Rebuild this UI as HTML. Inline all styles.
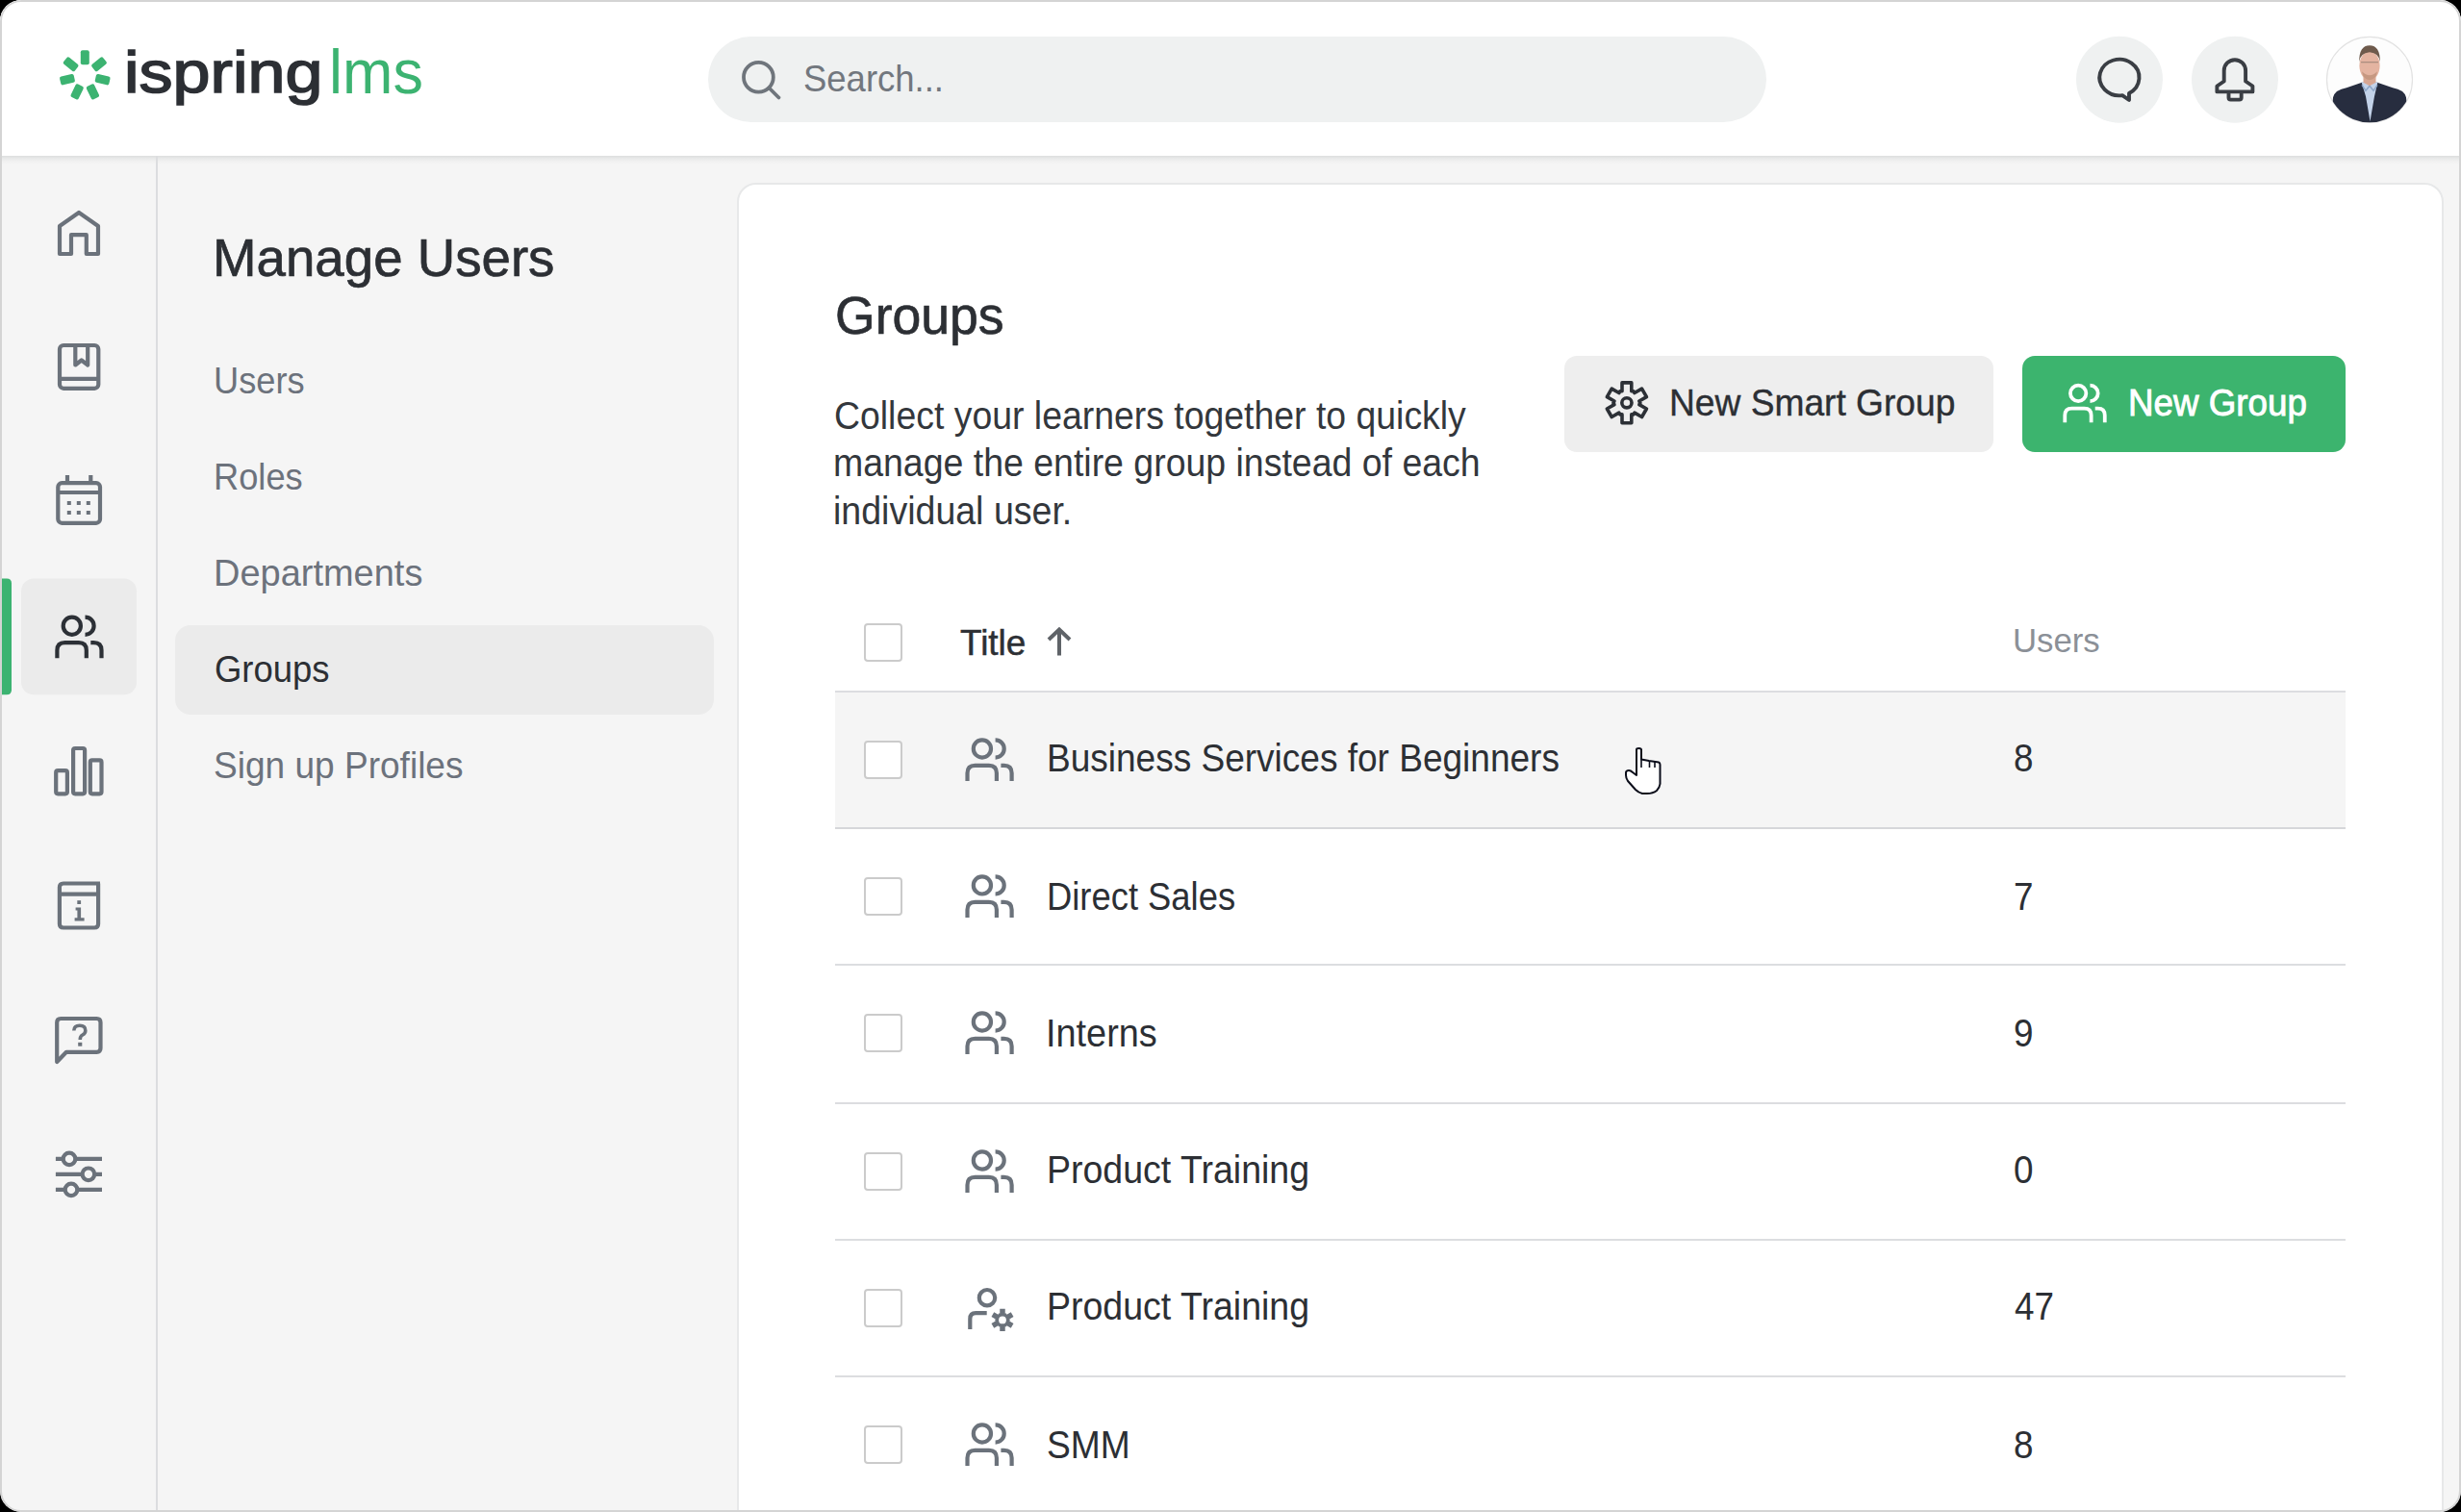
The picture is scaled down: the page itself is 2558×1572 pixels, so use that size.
<!DOCTYPE html>
<html><head><meta charset="utf-8">
<style>
html,body{margin:0;padding:0;background:#000;}
body{width:2558px;height:1572px;overflow:hidden;position:relative;font-family:"Liberation Sans",sans-serif;}
#frame{position:absolute;left:0;top:0;width:2558px;height:1572px;border-radius:22px;overflow:hidden;background:#f5f5f5;}
#border{position:absolute;left:0;top:0;width:2558px;height:1572px;box-sizing:border-box;border:2px solid #d4d4d4;border-radius:22px;}
.a{position:absolute;}
.t{position:absolute;white-space:pre;line-height:1;transform-origin:0 0;}
svg.a{overflow:visible;}
.cb{width:40px;height:40px;box-sizing:border-box;border:2px solid #cbcbcb;border-radius:4px;background:#fff;}
</style></head>
<body>
<div id="frame">
  <div class="a" style="left:0;top:0;width:2558px;height:162px;background:#fff;"></div>
  <div class="a" style="left:0;top:162px;width:2558px;height:9px;background:linear-gradient(#dcdede,#e8e9e9 30%,#f1f1f1 65%,#f5f5f5);"></div>
  <div class="a" style="left:162px;top:162px;width:2px;height:1410px;background:#dcdddf;"></div>
  <div class="a" style="left:766px;top:190px;width:1774px;height:1420px;box-sizing:border-box;background:#fff;border-radius:20px;border:2px solid #e7e8e9;"></div>
  <div class="a" style="left:736px;top:38px;width:1100px;height:89px;border-radius:45px;background:#eff1f1;"></div>
  <div class="a" style="left:182px;top:650px;width:560px;height:93px;border-radius:16px;background:#ebebeb;"></div>
  <div class="a" style="left:1626px;top:370px;width:446px;height:100px;border-radius:13px;background:#eeeeee;"></div>
  <div class="a" style="left:2102px;top:370px;width:336px;height:100px;border-radius:13px;background:#3cb46e;"></div>
  <div class="a cb" style="left:898px;top:648px;"></div><div class="a" style="left:868px;top:718.05px;width:1570px;height:2px;background:#dcdde0;"></div><div class="a" style="left:868px;top:720.05px;width:1570px;height:139.95px;background:#f5f5f5;"></div><div class="a" style="left:868px;top:860.00px;width:1570px;height:2px;background:#d6d7da;"></div><div class="a cb" style="left:898px;top:770.05px;"></div><div class="a" style="left:868px;top:1002.05px;width:1570px;height:2px;background:#dcdde0;"></div><div class="a cb" style="left:898px;top:912.00px;"></div><div class="a" style="left:868px;top:1146.10px;width:1570px;height:2px;background:#dcdde0;"></div><div class="a cb" style="left:898px;top:1054.05px;"></div><div class="a" style="left:868px;top:1287.90px;width:1570px;height:2px;background:#dcdde0;"></div><div class="a cb" style="left:898px;top:1198.10px;"></div><div class="a" style="left:868px;top:1430.05px;width:1570px;height:2px;background:#dcdde0;"></div><div class="a cb" style="left:898px;top:1339.90px;"></div><div class="a cb" style="left:898px;top:1482.05px;"></div>

  <svg class="a" style="left:0;top:0" width="2558" height="1572" viewBox="0 0 2558 1572">
    <defs>
      <g id="grp" fill="none" stroke-width="4.2">
        <circle cx="18.6" cy="11.1" r="9.1"/>
        <path d="M32.3 2 A9.1 9.1 0 0 1 32.3 20.2"/>
        <path d="M3.2 44.7 L3.2 36.5 Q3.2 28.5 11.2 28.5 L25.6 28.5 Q33.6 28.5 33.6 36.5 L33.6 44.7"/>
        <path d="M38.1 28.5 L41.3 28.5 Q49.3 28.5 49.3 36.5 L49.3 44.7"/>
      </g>
      <path id="gearp" d="M-7.00 -12.12 L-4.90 -12.12 L-4.90 -20.90 L4.90 -20.90 L4.90 -12.12 L7.00 -12.12 L8.05 -10.31 L15.65 -14.69 L20.55 -6.21 L12.95 -1.82 L14.00 0.00 L12.95 1.82 L20.55 6.21 L15.65 14.69 L8.05 10.31 L7.00 12.12 L4.90 12.12 L4.90 20.90 L-4.90 20.90 L-4.90 12.12 L-7.00 12.12 L-8.05 10.31 L-15.65 14.69 L-20.55 6.21 L-12.95 1.82 L-14.00 -0.00 L-12.95 -1.82 L-20.55 -6.21 L-15.65 -14.69 L-8.05 -10.31Z"/>
      <clipPath id="avc"><circle cx="2463" cy="82.8" r="44.5"/></clipPath>
    </defs>
    <g fill="#3cb371"><rect x="99.60" y="74.00" width="15.00" height="9.00" rx="2" transform="rotate(-90.00 88.30 78.50)"/>
<rect x="99.60" y="74.00" width="15.00" height="9.00" rx="2" transform="rotate(-38.57 88.30 78.50)"/>
<rect x="99.60" y="74.00" width="15.00" height="9.00" rx="2" transform="rotate(12.86 88.30 78.50)"/>
<rect x="99.60" y="74.00" width="15.00" height="9.00" rx="2" transform="rotate(64.29 88.30 78.50)"/>
<rect x="99.60" y="74.00" width="15.00" height="9.00" rx="2" transform="rotate(115.71 88.30 78.50)"/>
<rect x="99.60" y="74.00" width="15.00" height="9.00" rx="2" transform="rotate(167.14 88.30 78.50)"/>
<rect x="99.60" y="74.00" width="15.00" height="9.00" rx="2" transform="rotate(218.57 88.30 78.50)"/></g>
    <g fill="none" stroke="#6f757c" stroke-width="3.8" stroke-linecap="round">
      <circle cx="788.4" cy="80.2" r="15.4"/>
      <path d="M800 92 L809.5 101.5"/>
    </g>
    <circle cx="2203" cy="82.8" r="45" fill="#eff1f1"/>
    <circle cx="2323" cy="82.8" r="45" fill="#eff1f1"/>
    <g fill="none" stroke="#3a3e44" stroke-width="3.9" stroke-linejoin="round" stroke-linecap="round">
      <path d="M2206 99.1 L2213 104 L2213 96.9 A20.6 18.8 0 1 0 2206 99.1 Z"/>
      <path d="M2311.7 84.5 L2311.7 73.4 A11.2 11.2 0 0 1 2334.1 73.4 L2334.1 84.5 L2341.4 89.5 L2341.4 95.4 L2304.4 95.4 L2304.4 89.5 Z"/>
      <path d="M2316.5 97.5 L2316.5 101.5 Q2316.5 103.6 2318.6 103.6 L2327.6 103.6 Q2329.7 103.6 2329.7 101.5 L2329.7 97.5"/>
    </g>
    <g transform="translate(2418 38.3)">
    <circle cx="45" cy="44.5" r="44.5" fill="#fdfdfd" stroke="#e2e2e2" stroke-width="1.2"/>
    </g>
    <g clip-path="url(#avc)"><g transform="translate(2418 38.3)">
      <path d="M5 90 L7 63 Q9 55 21 53 L37 47.5 L53 47.5 L69 53 Q81 55 83 63 L85 90 Z" fill="#272d3f"/>
      <path d="M36.5 47 L53.5 47 L50 62 L45.5 88 L41 62 Z" fill="#c3d2e9"/>
      <path d="M37 50 L41 56 L45 51 L49 56 L53 50" fill="none" stroke="#8da6c8" stroke-width="1.5"/>
      <path d="M38.5 37 L51.5 37 L51.5 47.5 L45 51 L38.5 47.5 Z" fill="#d7a692"/>
      <ellipse cx="45" cy="30" rx="10.6" ry="15" fill="#e4b4a1"/>
      <path d="M34.2 26 Q34 9 45 9 Q56 9 55.8 26 Q55 17 45 16 Q35 17 34.2 26 Z" fill="#6e5a4c"/>
      <path d="M36 26.5 L54 26.5" stroke="#9a8276" stroke-width="1.1"/>
      <path d="M37 36 Q38 44.5 45 45 Q52 44.5 53 36 Q49 40 45 40 Q41 40 37 36 Z" fill="#b98b74" opacity="0.7"/>
    </g></g>

    <rect x="22" y="601.6" width="120" height="120.7" rx="13" fill="#ebebeb"/>
    <path d="M2 601.6 L7 601.6 Q12 601.6 12 606.6 L12 717.3 Q12 722.3 7 722.3 L2 722.3 Z" fill="#3cb371"/>
    <g fill="none" stroke="#6b727b" stroke-width="4.2" stroke-linejoin="round">
      <path d="M62 264 L62 235 L82 221 L102 235 L102 264 L89.8 264 L89.8 244.2 L74 244.2 L74 264 Z"/>
      <rect x="62" y="359" width="40.3" height="44.8" rx="4"/>
      <path d="M62 393.9 L102.3 393.9"/>
      <path d="M78.3 359 L78.3 379.5 L84.7 374.5 L91.2 379.5 L91.2 359"/>
      <rect x="60.3" y="502.2" width="43.7" height="41.6" rx="4"/>
      <path d="M60.3 512 L104 512 M70 494 L70 502 M94.3 494 L94.3 502"/>
      <rect x="58.2" y="801.2" width="11.7" height="24.1" rx="2"/>
      <rect x="76.1" y="778" width="12" height="47.3" rx="2"/>
      <rect x="93.8" y="790.4" width="11.7" height="34.9" rx="2"/>
      <path d="M102.1 918.5 L102.1 960.5 Q102.1 964.5 98.1 964.5 L65.9 964.5 Q61.9 964.5 61.9 960.5 L61.9 922.5 Q61.9 918.5 65.9 918.5 L104 918.5 M61.9 929.7 L102.1 929.7"/>
      <path d="M59.2 1104 L59.2 1063 Q59.2 1059 63.2 1059 L100.5 1059 Q104.5 1059 104.5 1063 L104.5 1089.8 Q104.5 1093.8 100.5 1093.8 L69 1093.8 Z"/>
      <path d="M57.9 1204.9 L64.5 1204.9 M79.5 1204.9 L106 1204.9 M57.9 1220.8 L84.4 1220.8 M99.4 1220.8 L106 1220.8 M57.9 1236.9 L66.5 1236.9 M81.5 1236.9 L106 1236.9"/>
      <circle cx="72" cy="1204.9" r="6.3"/>
      <circle cx="91.9" cy="1220.8" r="6.3"/>
      <circle cx="74" cy="1236.9" r="6.3"/>
    </g>
    <g fill="#6b727b">
      <rect x="69.8" y="521" width="4" height="4"/><rect x="79.8" y="521" width="4" height="4"/><rect x="89.8" y="521" width="4" height="4"/>
      <rect x="69.8" y="531" width="4" height="4"/><rect x="79.8" y="531" width="4" height="4"/><rect x="89.8" y="531" width="4" height="4"/>
    </g>
    <g fill="#6b727b"><rect x="80.3" y="936.2" width="3.8" height="3.8"/><path d="M78.6 943.6 L84.1 943.6 L84.1 954.2 L87.6 954.2 L87.6 957.4 L77.6 957.4 L77.6 954.2 L80.4 954.2 L80.4 946.6 L78.6 946.6 Z"/></g>
    <path d="M76.8 1071.5 Q77 1066.3 82.8 1066.3 Q88.8 1066.3 88.8 1071.4 Q88.8 1074.4 85.8 1076 Q83.3 1077.4 83.3 1080.2 L83.3 1081" fill="none" stroke="#6b727b" stroke-width="3.6"/><rect x="81.2" y="1083.8" width="4.1" height="3.9" fill="#6b727b"/>
    <use href="#grp" x="56.2" y="639.6" stroke="#2c3036"/>

    <g fill="none" stroke="#2c3036" stroke-width="3.6" stroke-linejoin="round">
      <use href="#gearp" transform="translate(1690.9 418.8)"/>
      <circle cx="1690.9" cy="418.8" r="5.1"/>
    </g>
    <use href="#grp" transform="translate(2143.4 398.9) scale(0.9)" stroke="#fff" stroke-width="4.4"/>
    <g fill="none" stroke="#5f6368" stroke-width="3.6">
      <path d="M1101 657 L1101 681.6 M1090 665 L1101 654.5 L1112 665" stroke-width="4"/>
    </g>
    <use href="#grp" transform="translate(1002.3 767.35)" stroke="#6b727b"/><use href="#grp" transform="translate(1002.3 909.30)" stroke="#6b727b"/><use href="#grp" transform="translate(1002.3 1051.35)" stroke="#6b727b"/><use href="#grp" transform="translate(1002.3 1195.40)" stroke="#6b727b"/><g fill="none" stroke="#6b727b" stroke-width="4.2"><circle cx="1026" cy="1349.20" r="8.2"/><path d="M1008.3 1382.10 L1008.3 1371.20 Q1008.3 1365.20 1014.3 1365.20 L1025.7 1365.20"/></g><use href="#gearp" transform="translate(1042 1372.40) scale(0.56)" fill="#6b727b" stroke="none"/><circle cx="1042" cy="1372.40" r="3.9" fill="#fff"/><use href="#grp" transform="translate(1002.3 1479.35)" stroke="#6b727b"/>
    <g transform="translate(1690 778)">
      <path d="M11 1 Q11 0 13.5 0 Q16 0 16 1.5 L16 11.5 L24 13 L34 14.5 Q35.5 15 35.5 17 L35.5 37 Q35 41 32 44 Q28 47 22 47 L17 47 Q13 46 10 43 L2 34 Q0 31 0 28 L0 25 Q0.5 23 3 23 Q5 23 7 25 L11 28 Z" fill="#fff" stroke="#0b0d1a" stroke-width="2" stroke-linejoin="round"/>
      <path d="M16 11.5 L16 20 M24.5 13 L24.5 20 M30 14 L30 20" stroke="#0b0d1a" stroke-width="1.6"/>
    </g>
  </svg>
<div class="t" style="left:220.61px;top:239.9px;font-size:56.2px;font-weight:400;color:#2c2f34;-webkit-text-stroke:0.7px #2c2f34;transform:scaleX(0.9728);">Manage Users</div>
<div class="t" style="left:222.47px;top:376.0px;font-size:39.5px;font-weight:400;color:#6c727c;transform:scaleX(0.917);">Users</div>
<div class="t" style="left:221.96px;top:475.8px;font-size:39.5px;font-weight:400;color:#6c727c;transform:scaleX(0.9184);">Roles</div>
<div class="t" style="left:221.88px;top:576.0px;font-size:39.5px;font-weight:400;color:#6c727c;transform:scaleX(0.9614);">Departments</div>
<div class="t" style="left:222.88px;top:676.4px;font-size:39.5px;font-weight:400;color:#2c2f34;transform:scaleX(0.9234);">Groups</div>
<div class="t" style="left:221.92px;top:776.4px;font-size:39.5px;font-weight:400;color:#6c727c;transform:scaleX(0.938);">Sign up Profiles</div>
<div class="t" style="left:128.61px;top:44px;font-size:62px;font-weight:400;color:#2c2f34;-webkit-text-stroke:1.6px #2c2f34;transform:scaleX(1.1299);">ispring</div>
<div class="t" style="left:341.66px;top:42px;font-size:65.6px;font-weight:400;color:#3cb371;transform:scaleX(0.9594);">lms</div>
<div class="t" style="left:834.75px;top:62.4px;font-size:39.5px;font-weight:400;color:#72777e;transform:scaleX(0.9235);">Search...</div>
<div class="t" style="left:868.05px;top:300.9px;font-size:55.0px;font-weight:400;color:#2c2f34;-webkit-text-stroke:0.7px #2c2f34;transform:scaleX(0.9734);">Groups</div>
<div class="t" style="left:867.17px;top:411.6px;font-size:40.0px;font-weight:400;color:#33373c;transform:scaleX(0.9349);">Collect your learners together to quickly</div>
<div class="t" style="left:866.13px;top:461.3px;font-size:40.0px;font-weight:400;color:#33373c;transform:scaleX(0.9364);">manage the entire group instead of each</div>
<div class="t" style="left:866.12px;top:511.0px;font-size:40.0px;font-weight:400;color:#33373c;transform:scaleX(0.9381);">individual user.</div>
<div class="t" style="left:1735.38px;top:400.2px;font-size:38.8px;font-weight:400;color:#2c2f34;-webkit-text-stroke:0.4px #2c2f34;transform:scaleX(0.9578);">New Smart Group</div>
<div class="t" style="left:2212.11px;top:400.2px;font-size:38.8px;font-weight:400;color:#ffffff;-webkit-text-stroke:0.9px #ffffff;transform:scaleX(0.9474);">New Group</div>
<div class="t" style="left:997.9px;top:651.0px;font-size:36.8px;font-weight:400;color:#2c2f34;-webkit-text-stroke:0.5px #2c2f34;transform:scaleX(1.0029);">Title</div>
<div class="t" style="left:2092.16px;top:649.2px;font-size:35.8px;font-weight:400;color:#8b9097;transform:scaleX(0.9703);">Users</div>
<div class="t" style="left:1088.15px;top:768.1px;font-size:40.0px;font-weight:400;color:#2c2f34;transform:scaleX(0.9255);">Business Services for Beginners</div>
<div class="t" style="left:2093.38px;top:768.1px;font-size:40.0px;font-weight:400;color:#2c2f34;transform:scaleX(0.92);">8</div>
<div class="t" style="left:1088.18px;top:911.9px;font-size:40.0px;font-weight:400;color:#2c2f34;transform:scaleX(0.9094);">Direct Sales</div>
<div class="t" style="left:2093.38px;top:911.9px;font-size:40.0px;font-weight:400;color:#2c2f34;transform:scaleX(0.92);">7</div>
<div class="t" style="left:1087.16px;top:1054.0px;font-size:40.0px;font-weight:400;color:#2c2f34;transform:scaleX(0.9466);">Interns</div>
<div class="t" style="left:2093.38px;top:1054.0px;font-size:40.0px;font-weight:400;color:#2c2f34;transform:scaleX(0.92);">9</div>
<div class="t" style="left:1088.12px;top:1196.4px;font-size:40.0px;font-weight:400;color:#2c2f34;transform:scaleX(0.9375);">Product Training</div>
<div class="t" style="left:2093.38px;top:1196.4px;font-size:40.0px;font-weight:400;color:#2c2f34;transform:scaleX(0.92);">0</div>
<div class="t" style="left:1088.12px;top:1338.0px;font-size:40.0px;font-weight:400;color:#2c2f34;transform:scaleX(0.9375);">Product Training</div>
<div class="t" style="left:2094.3px;top:1338.0px;font-size:40.0px;font-weight:400;color:#2c2f34;transform:scaleX(0.92);">47</div>
<div class="t" style="left:1088.14px;top:1482.3px;font-size:40.0px;font-weight:400;color:#2c2f34;transform:scaleX(0.9292);">SMM</div>
<div class="t" style="left:2093.38px;top:1482.3px;font-size:40.0px;font-weight:400;color:#2c2f34;transform:scaleX(0.92);">8</div>
  <div id="border"></div>
</div>
</body></html>
